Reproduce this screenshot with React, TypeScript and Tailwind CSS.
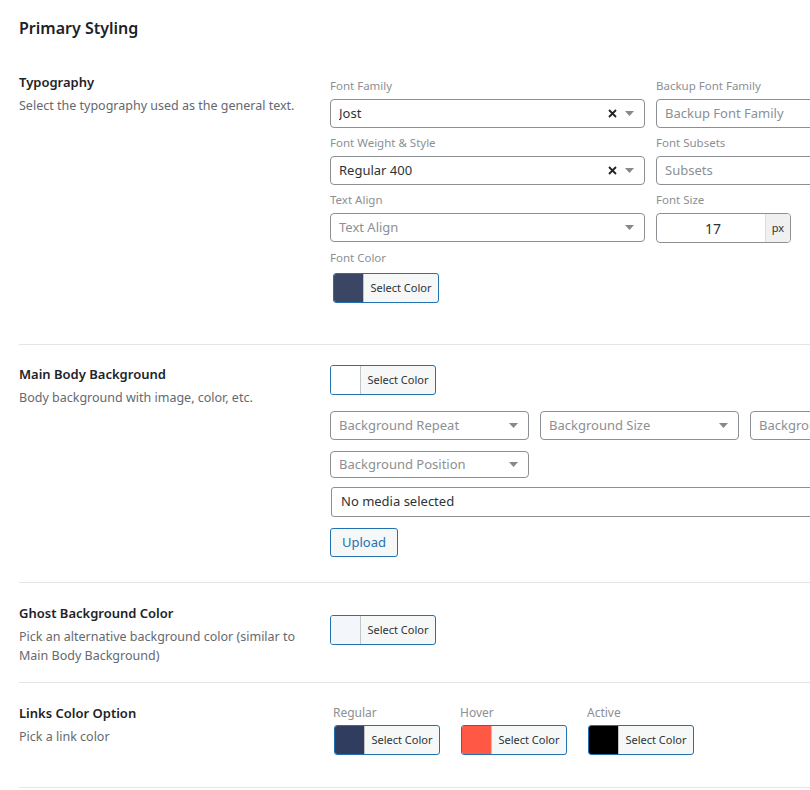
import React from 'react';

const font = { fontFamily: '"Segoe UI", "Noto Sans", "Open Sans", sans-serif' };

const Caret: React.FC = () => (
  <svg width="9" height="5" viewBox="0 0 9 5" className="shrink-0">
    <path d="M0 0h9L4.5 5z" fill="#888" />
  </svg>
);

const Clear: React.FC = () => (
  <svg width="9" height="9" viewBox="0 0 9 9" className="shrink-0">
    <path d="M1 1l7 7M8 1L1 8" stroke="#1d2327" strokeWidth="1.8" />
  </svg>
);

const FieldLabel: React.FC<{ children: React.ReactNode }> = ({ children }) => (
  <div className="text-[11.5px] leading-[18px] text-[#8c8f94] h-[18px] mb-[4px]">{children}</div>
);

const Select: React.FC<{
  value?: string;
  placeholder?: string;
  clearable?: boolean;
  caret?: boolean;
  className?: string;
}> = ({ value, placeholder, clearable, caret = true, className = '' }) => (
  <div
    className={`flex items-center border border-[#8c8f94] rounded-[4px] bg-white pl-[8px] pr-[10px] overflow-hidden ${className}`}
  >
    <span className={`flex-1 truncate text-[13px] ${value ? 'text-[#2c3338]' : 'text-[#8c8f94]'}`}>
      {value || placeholder}
    </span>
    {clearable && (
      <span className="mr-[8px] flex">
        <Clear />
      </span>
    )}
    {caret && <Caret />}
  </div>
);

const ColorButton: React.FC<{ color: string }> = ({ color }) => (
  <button className="flex h-[30px] w-[106px] border border-[#2271b1] rounded-[3px] overflow-hidden bg-[#f6f7f7] p-0">
    <span className="w-[30px] h-full border-r border-[#c3c4c7]" style={{ background: color }} />
    <span className="flex-1 flex items-center justify-center text-[11px] text-[#2c3338]">Select Color</span>
  </button>
);

const Section: React.FC<{
  title: string;
  desc: React.ReactNode;
  pad: string;
  children: React.ReactNode;
}> = ({ title, desc, pad, children }) => (
  <div className={`flex border-b border-[#e5e5e5] ${pad}`}>
    <div className="w-[311px] shrink-0 pr-[20px]">
      <div className="text-[13px] leading-[20px] font-semibold text-[#1d2327]">{title}</div>
      <div className="mt-[4px] text-[12.5px] leading-[19px] text-[#646970]">{desc}</div>
    </div>
    <div className="flex-1">{children}</div>
  </div>
);

export default function App() {
  return (
    <div className="w-[810px] h-[790px] overflow-hidden bg-white" style={font}>
      <div className="w-[1000px] pl-[19px]">
        <h1 className="pt-[17px] text-[16px] leading-[22px] font-semibold text-[#1d2327]">Primary Styling</h1>

        {/* typography */}
        <Section
          title="Typography"
          desc="Select the typography used as the general text."
          pad="pt-[33px] pb-[41px]"
        >
          <div className="pt-[5px] grid grid-cols-[315px_200px] gap-x-[11px]">
            <div>
              <FieldLabel>Font Family</FieldLabel>
              <Select value="Jost" clearable className="w-[315px] h-[29px]" />
            </div>
            <div>
              <FieldLabel>Backup Font Family</FieldLabel>
              <Select placeholder="Backup Font Family" caret={false} className="w-[200px] h-[29px]" />
            </div>
            <div className="mt-[6px]">
              <FieldLabel>Font Weight &amp; Style</FieldLabel>
              <Select value="Regular 400" clearable className="h-[29px]" />
            </div>
            <div className="mt-[6px]">
              <FieldLabel>Font Subsets</FieldLabel>
              <Select placeholder="Subsets" caret={false} className="h-[29px]" />
            </div>
            <div className="mt-[6px]">
              <FieldLabel>Text Align</FieldLabel>
              <Select placeholder="Text Align" className="h-[29px]" />
            </div>
            <div className="mt-[6px]">
              <FieldLabel>Font Size</FieldLabel>
              <div className="flex w-[135px] h-[30px] border border-[#8c8f94] rounded-[4px] overflow-hidden">
                <span className="flex-1 flex items-center justify-center pl-[4px] text-[14px] text-[#2c3338]">17</span>
                <span className="w-[25px] flex items-center justify-center border-l border-[#dcdcde] bg-[#f0f0f1] text-[11px] text-[#2c3338]">
                  px
                </span>
              </div>
            </div>
            <div className="mt-[6px] col-span-2">
              <FieldLabel>Font Color</FieldLabel>
              <div className="pl-[3px] pt-[2px]">
                <ColorButton color="#3a4664" />
              </div>
            </div>
          </div>
        </Section>

        {/* body background */}
        <Section
          title="Main Body Background"
          desc="Body background with image, color, etc."
          pad="pt-[19px] pb-[25px]"
        >
          <div className="pt-[1px]">
            <ColorButton color="#ffffff" />
            <div className="mt-[16px] flex gap-x-[11px]">
              <Select placeholder="Background Repeat" className="w-[199px] h-[29px]" />
              <Select placeholder="Background Size" className="w-[199px] h-[29px]" />
              <Select placeholder="Background Attachment" className="w-[199px] h-[29px]" />
            </div>
            <div className="mt-[11px]">
              <Select placeholder="Background Position" className="w-[199px] h-[27px]" />
            </div>
            <div className="mt-[9px] ml-[1px] flex items-center h-[30px] w-[600px] border border-[#8c8f94] rounded-[3px] pl-[9px] text-[13px] text-[#2c3338]">
              No media selected
            </div>
            <button className="mt-[11px] h-[29px] px-[11px] border border-[#2271b1] rounded-[3px] bg-[#f6f7f7] text-[13px] text-[#2271b1]">
              Upload
            </button>
          </div>
        </Section>

        {/* ghost background */}
        <Section
          title="Ghost Background Color"
          desc={
            <>
              Pick an alternative background color (similar to
              <br />
              Main Body Background)
            </>
          }
          pad="pt-[20px] pb-[17px]"
        >
          <div className="pt-[12px]">
            <ColorButton color="#f3f6fa" />
          </div>
        </Section>

        {/* links */}
        <Section title="Links Color Option" desc="Pick a link color" pad="pt-[20px] pb-[32px]">
          <div className="flex gap-x-[20px] pl-[3px] pt-[2px]">
            {[
              { label: 'Regular', color: '#313d5f' },
              { label: 'Hover', color: '#ff5845' },
              { label: 'Active', color: '#000000' },
            ].map((c) => (
              <div key={c.label}>
                <div className="text-[12px] leading-[16px] text-[#8c8f94] mb-[4px]">{c.label}</div>
                <div className="pl-[1px]">
                  <ColorButton color={c.color} />
                </div>
              </div>
            ))}
          </div>
        </Section>
      </div>
    </div>
  );
}
